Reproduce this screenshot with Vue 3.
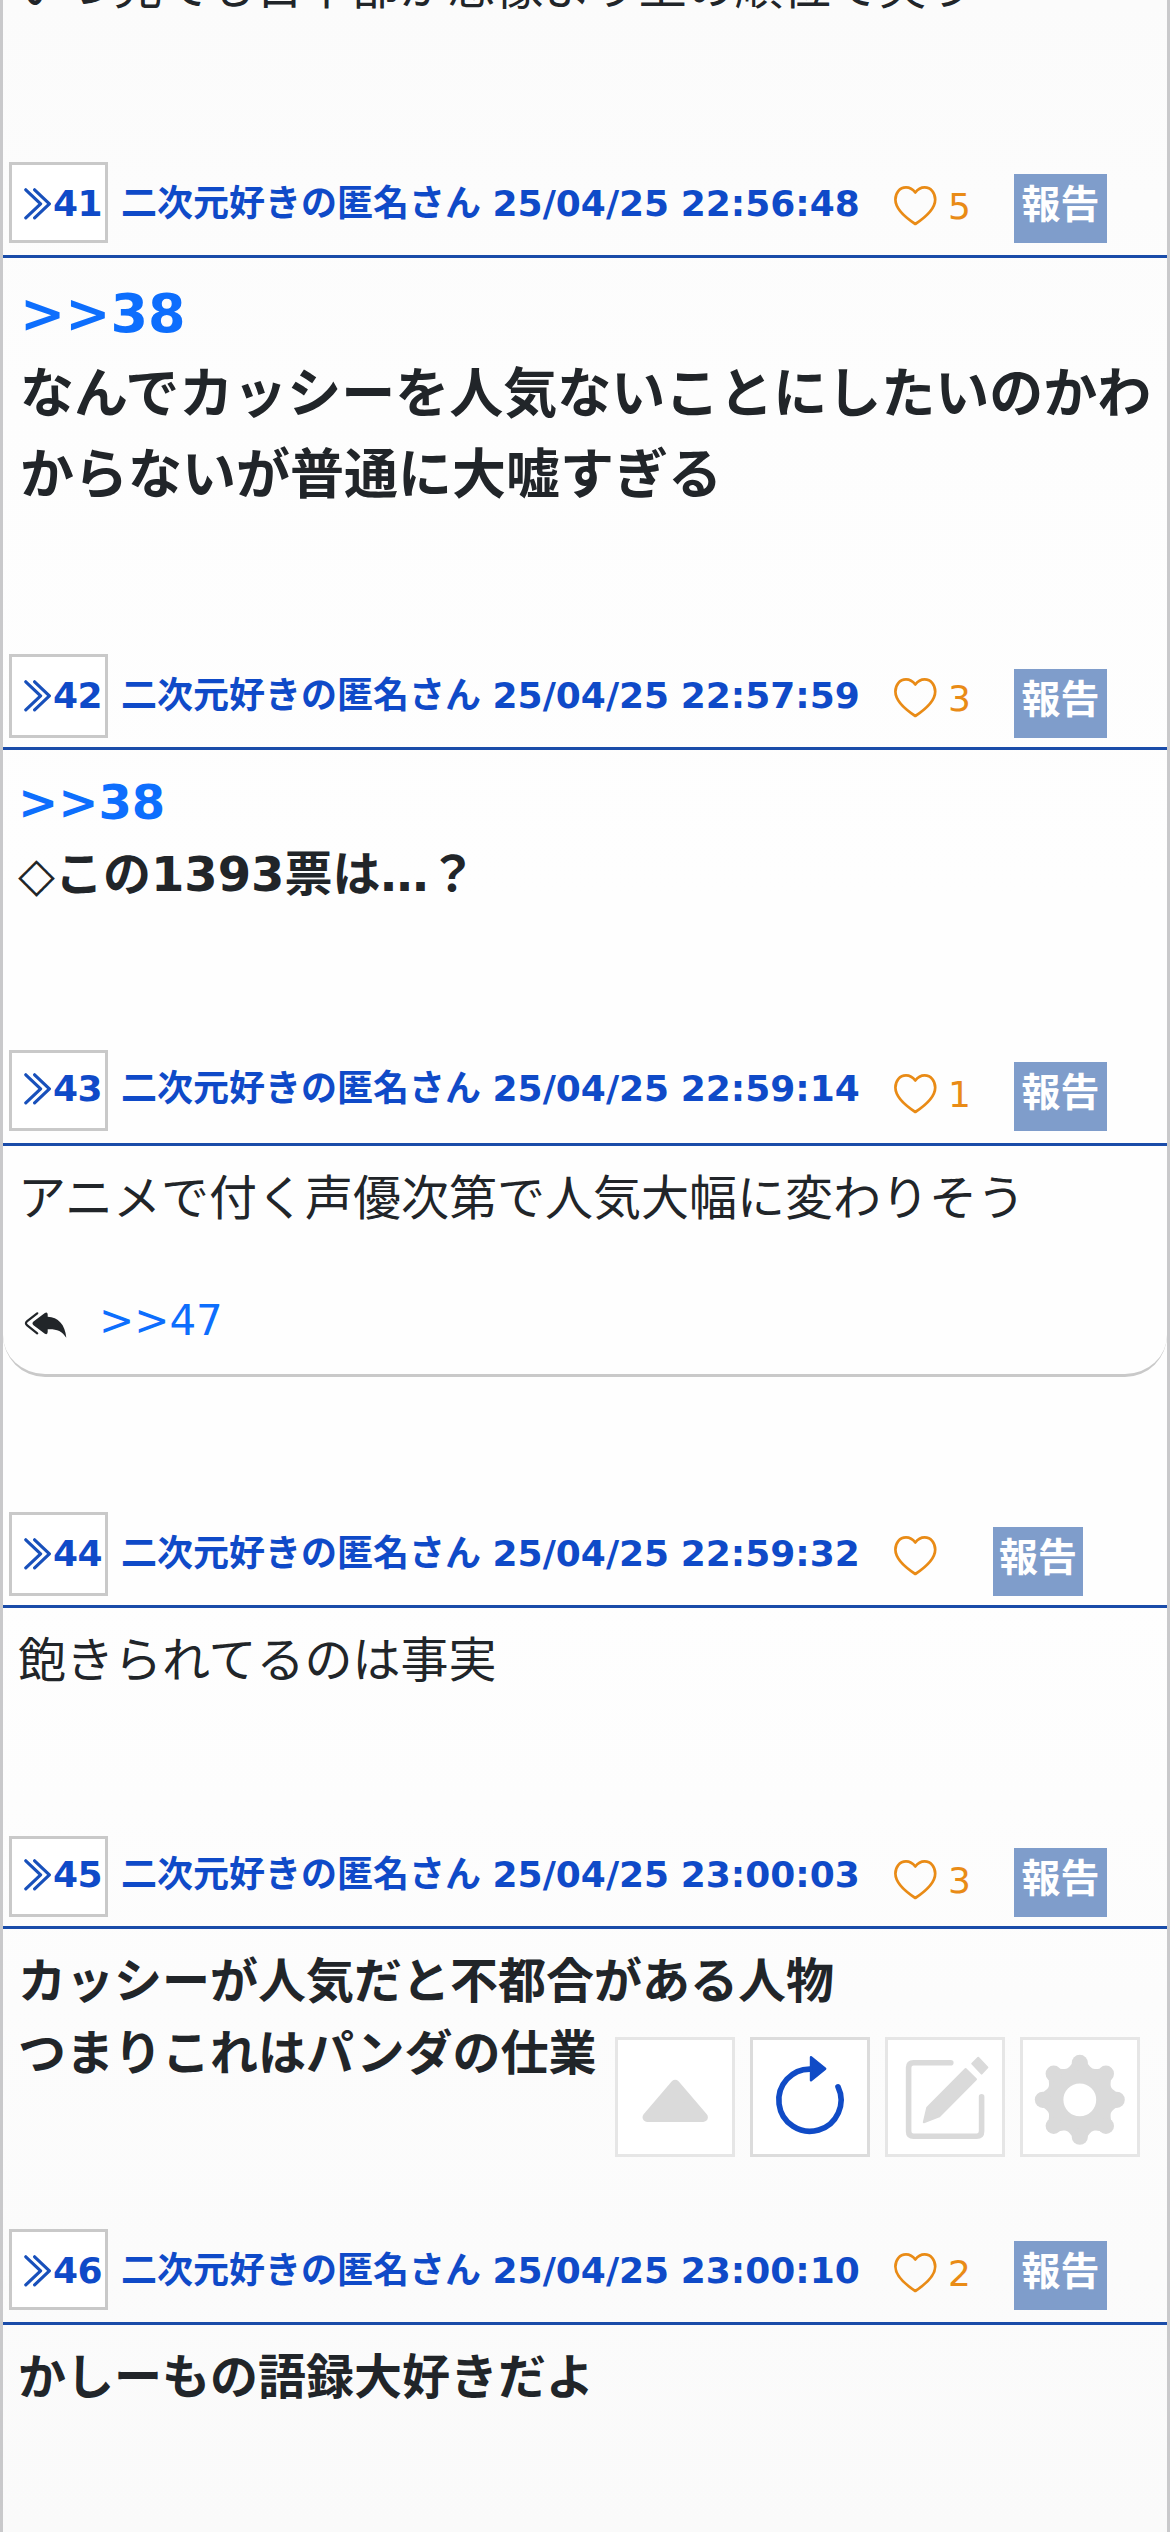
<script setup>
const author = '二次元好きの匿名さん'

const posts = [
  { no: 41, date: '25/04/25 22:56:48', likes: 5, height: 492, size: 'large', ref: '>>38', lines: ['なんでカッシーを人気ないことにしたいのかわ', 'からないが普通に大嘘すぎる'] },
  { no: 42, date: '25/04/25 22:57:59', likes: 3, height: 396, size: 'bold', head: 'tall', ref: '>>38', lines: ['◇この1393票は…？'] },
  { no: 43, date: '25/04/25 22:59:14', likes: 1, height: 462, size: 'normal', head: 'raised', lines: ['アニメで付く声優次第で人気大幅に変わりそう'], reply: '>>47' },
  { no: 44, date: '25/04/25 22:59:32', likes: null, height: 324, size: 'normal', head: 'tall', lines: ['飽きられてるのは事実'] },
  { no: 45, date: '25/04/25 23:00:03', likes: 3, height: 393, size: 'bold', head: 'raised short', lines: ['カッシーが人気だと不都合がある人物', 'つまりこれはパンダの仕業'] },
  { no: 46, date: '25/04/25 23:00:10', likes: 2, height: 303, size: 'bold', lines: ['かしーもの語録大好きだよ'] }
]

// Eight-lobed gear: wavy outline plus a round cap on every tooth
const cx = 59.8
const cy = 62.8
const outline = []
for (let i = 0; i < 180; i++) {
  const a = (i * Math.PI) / 90
  const r = 37.6 + 3.8 * Math.cos(8 * a)
  outline.push(`${(cx + r * Math.sin(a)).toFixed(2)},${(cy - r * Math.cos(a)).toFixed(2)}`)
}
const gear = `M${outline.join('L')}ZM43.4,62.8a16.4,16.4 0 1 0 32.8,0a16.4,16.4 0 1 0 -32.8,0Z`
const teeth = Array.from({ length: 8 }, (_, i) => ({
  x: cx + 36.9 * Math.sin((i * Math.PI) / 4),
  y: cy - 36.9 * Math.cos((i * Math.PI) / 4)
}))
</script>

<template>
  <main class="thread">
    <div class="previous"><p>いつ見ても日下部が想像より上の順位で笑う</p></div>

    <article v-for="p in posts" :key="p.no" class="post" :style="{ height: p.height + 'px' }">
      <header class="head" :class="p.head">
        <a class="number">
          <svg class="chevrons" width="28" height="32" viewBox="0 0 28 32"><path d="M1.8 1.8 L16.6 15.8 L1.8 29.8 M10.6 1.8 L25.4 15.8 L10.6 29.8" /></svg>
          <span>{{ p.no }}</span>
        </a>
        <div class="name">{{ author }} {{ p.date }}</div>
        <svg class="heart" width="43" height="40" viewBox="0 0 43 40"><path d="M21.3 6.5C18.4 2.6 15 1.4 12 1.4C5.5 1.4 1.4 7 1.4 13.5C1.4 21.5 8.5 29.6 21.3 38C34.1 29.6 41.2 21.5 41.2 13.5C41.2 7 37.1 1.4 30.6 1.4C27.6 1.4 24.2 2.6 21.3 6.5Z" /></svg>
        <span class="likes">{{ p.likes }}</span>
        <button class="report" :class="{ unliked: p.likes === null }">報告</button>
      </header>
      <div class="body" :class="[p.size, { answered: p.reply }]">
        <p v-if="p.ref"><a>{{ p.ref }}</a></p>
        <p v-for="line in p.lines" :key="line">{{ line }}</p>
        <div v-if="p.reply" class="reply">
          <svg width="43" height="27" viewBox="0 0 43 27">
            <path class="back" d="M13.2 1.3L3.2 9.2Q0.6 11.3 3.2 13.4L13.2 21.3" />
            <path d="M9.5 9.4L20.5 1.2Q23.5 -0.6 23.7 2.4V4.8C34 5.2 41.2 12.5 42.3 25.8C38 18.6 32 16.8 23.7 17.2V20Q23.5 23.4 20.5 21.4L9.5 13.2Q7.4 11.3 9.5 9.4Z" />
          </svg>
          <a>{{ p.reply }}</a>
        </div>
      </div>
    </article>

    <nav class="tools">
      <button><svg viewBox="0 0 120 120"><path d="M60.2 47.5L88.2 80.3H32.2Z" class="triangle" /></svg></button>
      <button class="active"><svg viewBox="0 0 120 120">
        <path class="arc" d="M61 32.1A31.1 31.1 0 1 0 88 49.8" />
        <path class="tip" d="M61 20.3L75.2 31.7L61 43.2Z" />
      </svg></button>
      <button><svg viewBox="0 0 120 120">
        <path class="frame" d="M65.8 25.8H28.6Q23.6 25.8 23.6 30.8V94.2Q23.6 99.2 28.6 99.2H91.6Q96.6 99.2 96.6 94.2V59.8" />
        <path class="pencil" d="M80.6 32L91 42.2L54.3 79.4L38.8 85.2L42.2 70.7Z" />
        <path class="pencil" d="M87.2 26.6L93.2 20.8L102.4 30.4L96.6 36.6Z" />
      </svg></button>
      <button><svg viewBox="0 0 120 120">
        <path :d="gear" fill-rule="evenodd" />
        <circle v-for="(t, i) in teeth" :key="i" :cx="t.x" :cy="t.y" r="8.1" />
      </svg></button>
    </nav>
  </main>
</template>

<style>
body {
  margin: 0;
  background: #fcfcfc;
}
</style>

<style scoped>
.thread {
  position: relative;
  box-sizing: border-box;
  width: 1170px;
  height: 2532px;
  overflow: hidden;
  border: solid #c9c9cb;
  border-width: 0 3px;
  background: linear-gradient(#fbfbfb 0, #fdfdfd 400px, #fefefe 900px, #fefefe 1600px, #fcfcfc 2000px, #fafafa 2532px);
  color: #212529;
  font-family: "DejaVu Sans", "Noto Sans CJK JP", sans-serif;
}
p {
  margin: 0;
  white-space: nowrap;
}
a {
  color: #0d6efd;
}
button {
  padding: 0;
  border: 0;
  font-family: inherit;
}
.previous {
  display: flex;
  align-items: flex-end;
  height: 23px;
  margin-bottom: 139px;
  padding-left: 15px;
  font-size: 48px;
  line-height: 72px;
}
.post {
  display: flex;
  flex-direction: column;
}
.head {
  display: flex;
  align-items: flex-start;
  flex: none;
  box-sizing: border-box;
  height: 96px;
  padding-left: 6px;
  border-bottom: 3px solid #1a4ca9;
  color: #0f4ac8;
  font-size: 36px;
  font-weight: bold;
  line-height: 42px;
}
.head.short {
  height: 93px;
}
.number {
  display: flex;
  box-sizing: border-box;
  flex: none;
  width: 99px;
  height: 81px;
  padding: 17.5px 0 0 12px;
  border: 3px solid #c9c9c9;
  background: #fff;
  color: #0f4ac8;
}
.number span {
  letter-spacing: -0.5px;
}
.tall .number {
  height: 84px;
}
.chevrons {
  flex: none;
  margin-top: 5px;
  margin-right: 1px;
  fill: none;
  stroke: #1850bb;
  stroke-width: 3.2;
  stroke-linecap: round;
  stroke-linejoin: round;
}
.name {
  flex: none;
  width: 773px;
  margin-left: 13px;
  padding-top: 20.5px;
  white-space: nowrap;
  word-spacing: -1px;
}
.raised .number {
  padding-top: 14.5px;
}
.raised .name {
  padding-top: 17.5px;
}
.heart {
  flex: none;
  margin-top: 24px;
  fill: none;
  stroke: #e98b16;
  stroke-width: 2.7;
  stroke-linejoin: round;
}
.likes {
  flex: none;
  width: 66px;
  margin-left: 11px;
  padding-top: 24px;
  color: #e98b16;
  font-weight: normal;
}
.report {
  width: 93px;
  height: 69px;
  margin-top: 12px;
  padding-bottom: 8px;
  background: #7f9dcb;
  color: #fff;
  font-size: 39px;
  font-weight: bold;
  line-height: 61px;
}
.tall .report {
  margin-top: 15px;
}
.report.unliked {
  width: 90px;
  margin-left: -21px;
}
.body {
  padding: 16px 0 0 15px;
  font-size: 48px;
  line-height: 72px;
}
.bold,
.large {
  font-weight: bold;
}
.large {
  padding: 15px 0 0 17px;
  font-size: 54px;
  line-height: 81px;
}
.answered {
  box-sizing: border-box;
  height: 231px;
  border-bottom: 3px solid #c9c9c9;
  border-radius: 0 0 42px 42px;
}
.reply {
  display: flex;
  align-items: flex-start;
  margin-top: 55px;
  padding-left: 6px;
  font-size: 42px;
  line-height: 48px;
}
.reply svg {
  margin-top: 23px;
  margin-right: 32px;
  fill: #212529;
}
.reply a {
  margin-top: 8px;
}
.reply .back {
  fill: none;
  stroke: #212529;
  stroke-width: 2.2;
  stroke-linecap: round;
}
.tools {
  position: absolute;
  right: 27px;
  top: 2037px;
  display: flex;
  gap: 15px;
}
.tools button {
  width: 120px;
  height: 120px;
  overflow: hidden;
  border: 3px solid #e6e6e6;
  background: #fff;
}
.tools .active {
  border-color: #dcdcdc;
}
.tools svg {
  display: block;
  width: 120px;
  height: 120px;
  margin: -3px;
  fill: #dadada;
}
.triangle {
  stroke: #dadada;
  stroke-width: 9.4;
  stroke-linejoin: round;
}
.arc {
  fill: none;
  stroke: #104bc6;
  stroke-width: 5.6;
  stroke-linecap: round;
}
.tip {
  fill: #104bc6;
  stroke: #104bc6;
  stroke-width: 2.4;
  stroke-linejoin: round;
}
.frame {
  fill: none;
  stroke: #dadada;
  stroke-width: 5.6;
  stroke-linecap: round;
}
.pencil {
  stroke: #dadada;
  stroke-width: 2;
  stroke-linejoin: round;
}
</style>
